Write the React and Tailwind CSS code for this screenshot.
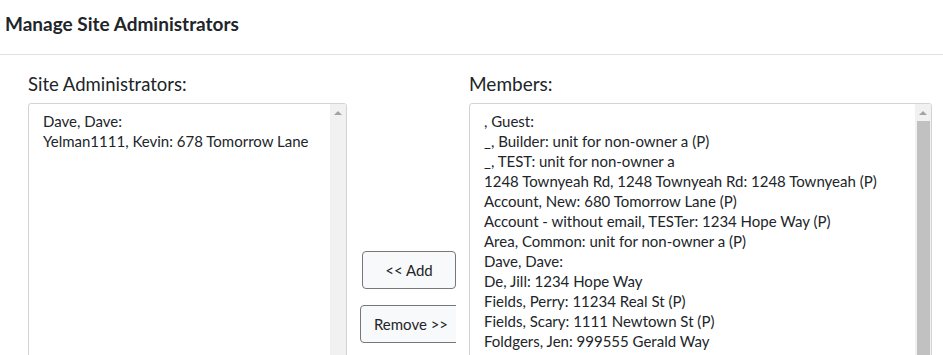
const admins = ["Dave, Dave:", "Yelman1111, Kevin: 678 Tomorrow Lane"];

const members = [
  ", Guest:",
  "_, Builder: unit for non-owner a (P)",
  "_, TEST: unit for non-owner a",
  "1248 Townyeah Rd, 1248 Townyeah Rd: 1248 Townyeah (P)",
  "Account, New: 680 Tomorrow Lane (P)",
  "Account - without email, TESTer: 1234 Hope Way (P)",
  "Area, Common: unit for non-owner a (P)",
  "Dave, Dave:",
  "De, Jill: 1234 Hope Way",
  "Fields, Perry: 11234 Real St (P)",
  "Fields, Scary: 1111 Newtown St (P)",
  "Foldgers, Jen: 999555 Gerald Way",
  "Gardner, Mike: 4321 Maple Ave (P)",
  "Hanson, Amy: 22 Oak St",
];

// listbox with a drawn scrollbar (track, up arrow, optional thumb)
function ListBox({ items, width, thumb }) {
  return (
    <div className={`${width} h-[300px] flex border border-[#ced4da] rounded-[3px] bg-white overflow-hidden`}>
      <div className="flex-1 overflow-hidden pl-[14px] pt-[7px] text-[15px] leading-[20px] text-[#212529]">
        {items.map((item, i) => (
          <div key={i} className="whitespace-nowrap">
            {item}
          </div>
        ))}
      </div>
      <div className="w-[16px] bg-[#f1f1f1] flex flex-col items-center">
        <div className="h-[17px] flex items-center justify-center">
          <div className="w-0 h-0 border-l-[4px] border-r-[4px] border-b-[4px] border-l-transparent border-r-transparent border-b-[#a3a3a3]" />
        </div>
        {thumb && <div className="w-[13px] flex-1 bg-[#c1c1c1]" />}
      </div>
    </div>
  );
}

export default function App() {
  return (
    <div className="h-[355px] overflow-hidden bg-white font-['Lato',sans-serif] text-[#212529]">
      <div className="h-[55px] border-b border-[#dee2e6] pl-[5px] pt-[11px]">
        <h1 className="text-[19px] font-bold leading-[26px]">Manage Site Administrators</h1>
      </div>

      <div className="flex pl-[28px] pt-[16px]">
        <div className="w-[319px]">
          <label className="block text-[18.5px] leading-[26px] mb-[6px]">Site Administrators:</label>
          <ListBox items={admins} width="w-[319px]" />
        </div>

        <div className="w-[122px] flex justify-center pt-[180px]">
          <div className="w-[96px] overflow-hidden flex flex-col gap-[16px] text-[15px]">
            <button className="ml-[2px] w-[94px] h-[38px] border border-[#777] rounded-[4px] bg-[#f8f9fa]">
              &lt;&lt; Add
            </button>
            <button className="w-[102px] shrink-0 h-[38px] border border-[#777] rounded-[4px] bg-[#f8f9fa]">
              Remove &gt;&gt;
            </button>
          </div>
        </div>

        <div className="w-[463px]">
          <label className="block text-[19px] leading-[26px] mb-[6px]">Members:</label>
          <ListBox items={members} width="w-[463px]" thumb />
        </div>
      </div>
    </div>
  );
}
